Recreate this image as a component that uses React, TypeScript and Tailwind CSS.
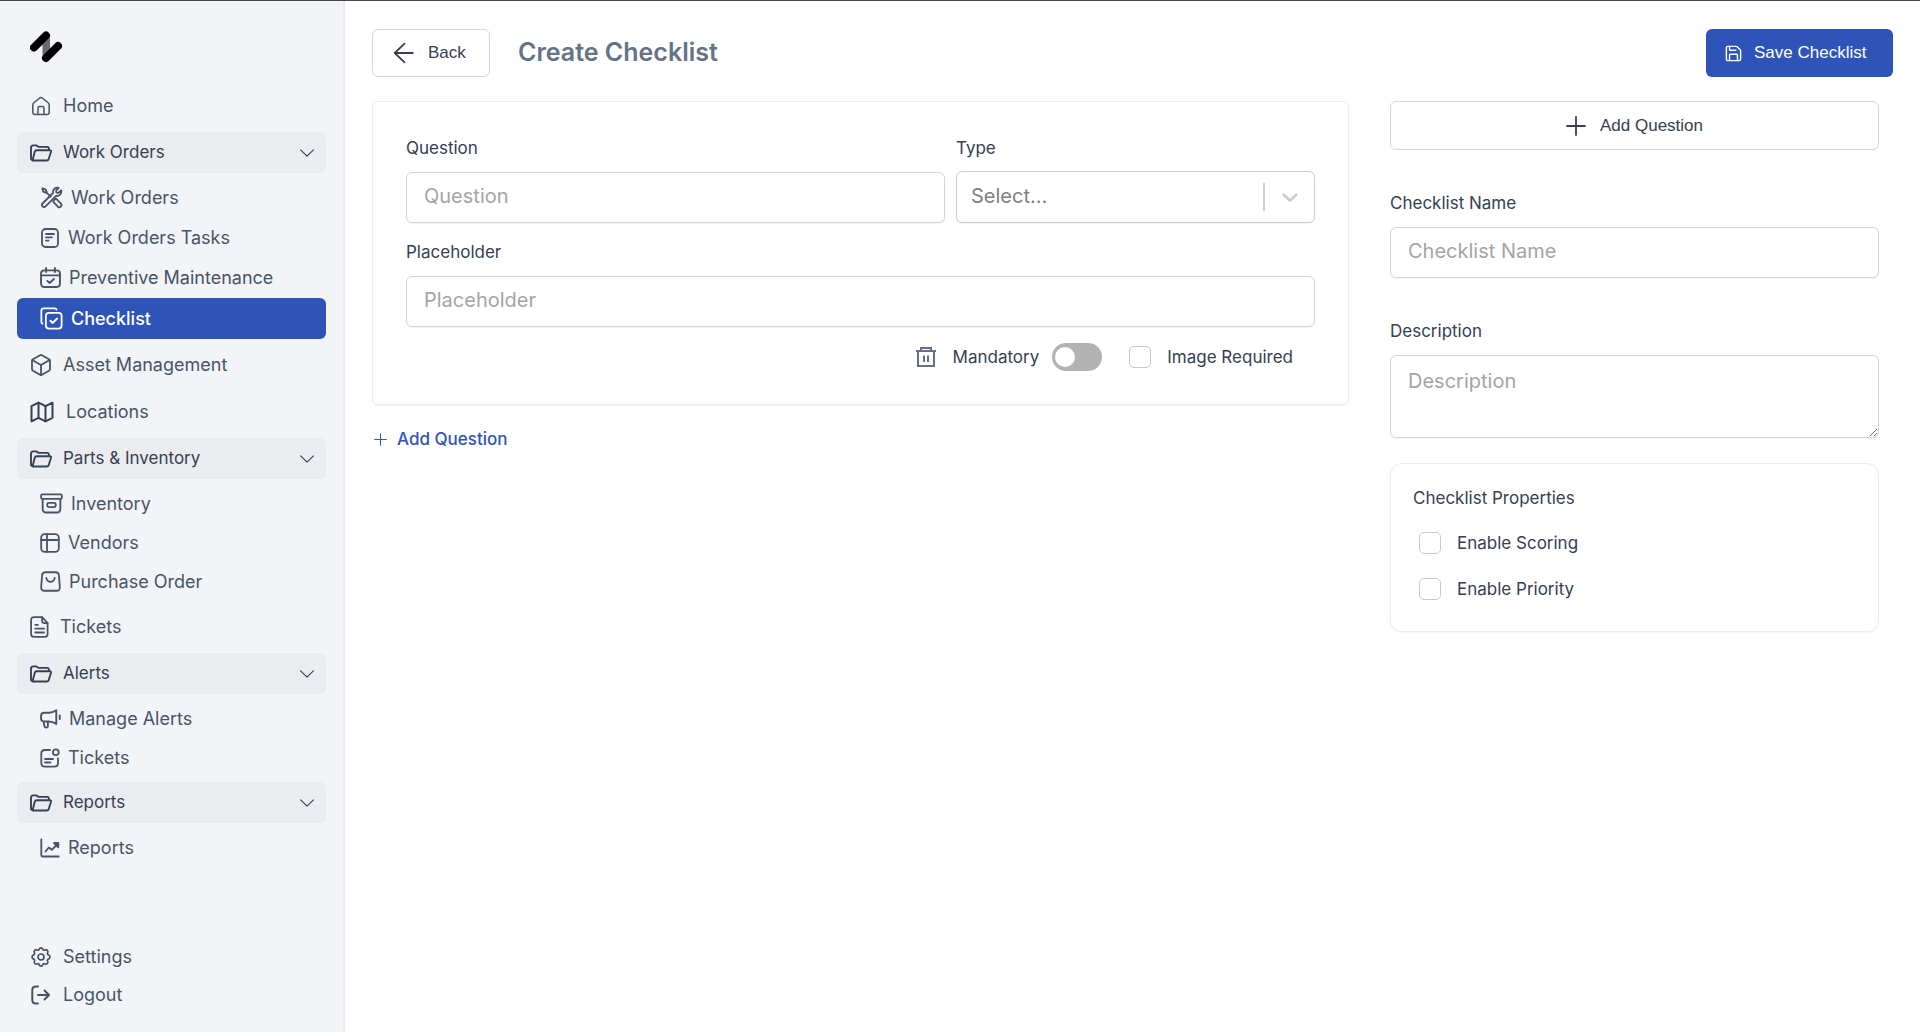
import type { ReactNode } from 'react';
import { Box, Save } from 'lucide-react';
import { TbCopyCheck, TbMap } from 'react-icons/tb';
import { clsx } from 'clsx';

interface IconProps {
  children: ReactNode;
  size?: number;
  strokeWidth?: number;
  className?: string;
}

function Icon({ children, size = 20, strokeWidth = 1.8, className }: IconProps) {
  return (
    <svg
      width={size}
      height={size}
      viewBox="0 0 20 20"
      fill="none"
      stroke="currentColor"
      strokeWidth={strokeWidth}
      strokeLinecap="round"
      strokeLinejoin="round"
      aria-hidden="true"
      className={clsx('shrink-0', className)}
    >
      {children}
    </svg>
  );
}

const Logo = () => (
  <svg width="32" height="32" viewBox="0 0 32 32" aria-label="Company logo" role="img">
    <path d="M12.5 13 20 6v13l-7.500 7z" fill="#6b6b6b" />
    <path d="M4 16.500 16 4.500M16 27 28 15" stroke="#000" strokeWidth="8" strokeLinecap="round" />
  </svg>
);

const HomeIcon = () => (
  <Icon strokeWidth={1.500}>
    <path d="M1.800 9.200c0-1 .4-1.800 1.100-2.400l5.400-4.600c1-.9 2.400-.9 3.400 0l5.400 4.600c.7.600 1.100 1.400 1.100 2.400v7c0 1.400-.8 2.300-2.200 2.300H4c-1.400 0-2.200-.9-2.200-2.300z" />
    <path d="M7 18.300v-6c0-1 .7-1.700 1.700-1.700h2.600c1 0 1.700.7 1.700 1.700v6" />
  </Icon>
);

const FolderIcon = () => (
  <Icon size={22} strokeWidth={1.700}>
    <path d="M3 16.800h12.200c.9 0 1.600-.5 1.800-1.400l2.100-6.600c.2-.8-.2-1.300-1.100-1.300H6c-.9 0-1.400.5-1.600 1.200L2.600 15.500" />
    <path d="M3 16.800c-1.400 0-2.100-.7-2.100-2V5.300c0-1.500.8-2.200 2.200-2.200h2.700l1.800 1.300h7.800c1.200 0 1.800.6 1.800 1.800v1" />
  </Icon>
);

const ToolsIcon = () => (
  <Icon size={23} strokeWidth={1.600}>
    <path d="m2 2 2.800.9 1 2.200-.8.800-2.200-1zM5.500 5.500l3.800 3.800" />
    <path d="M12.200 12.200 14 11l4.200 4.300c1.600 1.800-.9 4.300-2.700 2.700l-4-4.200z" />
    <path d="M16.200 1.700c-2.600-.9-5.400 1.300-4.800 4.300L2.200 15.200c-1.600 1.700.9 4.300 2.600 2.600L14 8.600c3 .6 5.200-2.200 4.300-4.800l-2.300 2.200-1.700-.3-.3-1.700z" />
  </Icon>
);

const TaskIcon = () => (
  <Icon>
    <rect x="2" y="1" width="16" height="18" rx="3.500" />
    <path d="M6 6h8M6 9.300h6M6 12.600h2.500" />
  </Icon>
);

const CalendarIcon = () => (
  <Icon size={21}>
    <rect x="1" y="3.200" width="18" height="15.800" rx="3" />
    <path d="M1.200 8h17.600M5.800 1v3.800M14.200 1v3.800M7 13.200l2.200 2 4-3.800" />
  </Icon>
);

const ArchiveIcon = () => (
  <Icon size={23} strokeWidth={1.600}>
    <rect x="1" y="2" width="18" height="4" rx="1" />
    <path d="M2.300 6v8.500c0 2 1 3.300 3.200 3.300h9c2.200 0 3.200-1.300 3.200-3.300V6" />
    <rect x="6.300" y="9.500" width="7.400" height="3.600" rx="1.300" />
  </Icon>
);

const TableIcon = () => (
  <Icon>
    <rect x="1.200" y="1.200" width="17.600" height="17.600" rx="3.500" />
    <path d="M7 1.200v17.600M1.200 7h17.600" />
  </Icon>
);

const BagIcon = () => (
  <Icon size={21} strokeWidth={1.700}>
    <path d="M5.200 1.200h9.600c1.800 0 3 1 3.200 2.700l.9 11.600c.1 2-1 3.300-3 3.300H4.100c-2 0-3.100-1.300-3-3.300L2 3.900c.2-1.700 1.400-2.700 3.200-2.700z" />
    <path d="M6 6.500c.5 2.400 2 3.800 4 3.800s3.500-1.400 4-3.800" />
  </Icon>
);

const DocumentIcon = () => (
  <Icon size={22} strokeWidth={1.600} className="-mr-1 -ml-px">
    <path d="M11 1H3.700C2 1 1 2 1 3.700v12.600C1 18 2 19 3.700 19h9.600c1.700 0 2.700-1 2.700-2.700V6.500z" />
    <path d="M11 1v3.300c0 1.400.8 2.200 2.200 2.200H16M4.800 8h2.400M4.800 11.500h8M4.800 15h8" />
  </Icon>
);

const MegaphoneIcon = () => (
  <Icon size={21}>
    <path d="M4 4.500h4.500c2.500 0 4.700-.8 7-2.300v13c-2.300-1.500-4.500-2.300-7-2.300H4c-2 0-3-1-3-3V7.500c0-2 1-3 3-3zM3.300 13l1 4.500c.3 1.600 3.200 1.600 3.200-.2V13M18.800 7v3.500" />
  </Icon>
);

const NoteIcon = () => (
  <Icon>
    <path d="M10 2H5C2.700 2 1.300 3.400 1.300 5.700V15c0 2.300 1.400 3.700 3.700 3.700h9.300c2.300 0 3.700-1.400 3.700-3.700v-4.500M5 11h8M5 14.500h5.500" />
    <circle cx="15.800" cy="4.300" r="2.900" />
  </Icon>
);

const ChartIcon = () => (
  <Icon>
    <path d="M1.300 1.300v16c0 .8.4 1.200 1.200 1.200h16.200M5.500 13.500l3.300-4 3 2.300L17.500 6" />
    <path d="M14 5h4.300v4.300z" fill="currentColor" />
  </Icon>
);

const GearIcon = () => (
  <Icon strokeWidth={1.700}>
    <circle cx="10" cy="10" r="3" />
    <path d="M8.600 1.500q1.400-1.100 2.800 0l.8 1.500q.4.400 1 .2l1.700-.5q1.700.2 2 2l-.5 1.800q-.1.600.3.900l1.700 1q1 1.600 0 3.100l-1.700 1q-.4.400-.3.900l.5 1.800q-.4 1.700-2 2l-1.700-.5q-.6-.1-1 .3l-.8 1.500q-1.400 1.100-2.800 0L7.800 17q-.4-.4-1-.3l-1.700.5q-1.700-.3-2-2l.5-1.800q.1-.5-.3-.9l-1.700-1q-1-1.500 0-3.100l1.700-1q.4-.3.3-.9l-.5-1.800q.3-1.800 2-2l1.700.5q.6.200 1-.2z" />
  </Icon>
);

const LogoutIcon = () => (
  <Icon strokeWidth={2}>
    <path d="M7 1.500H4.800C2.600 1.500 1.300 2.700 1.300 5v10c0 2.300 1.300 3.500 3.500 3.500H7M7 10h11M13.500 5.500 18 10l-4.500 4.500" />
  </Icon>
);

const ChevronIcon = () => (
  <Icon size={16} strokeWidth={1.400}>
    <path d="m2 6 8 8 8-8" />
  </Icon>
);

const ArrowLeftIcon = () => (
  <Icon size={22} strokeWidth={1.600}>
    <path d="M18 10H1.500M10.500 1.500 1.500 10l9 8.500" />
  </Icon>
);

const PlusIcon = ({ size, strokeWidth }: { size: number; strokeWidth?: number }) => (
  <Icon size={size} strokeWidth={strokeWidth}>
    <path d="M10 1v18M1 10h18" />
  </Icon>
);

const TrashIcon = () => (
  <svg width="22" height="22" viewBox="0 0 22 22" fill="none" stroke="currentColor" strokeWidth="2" aria-hidden="true">
    <path d="M1 5h20M6 5V2h10v3M3 5v15h16V5M9 9.500V16M13 9.500V16" />
  </svg>
);

function NavLink({ icon, label }: { icon: ReactNode; label: string }) {
  return (
    <a href="#" className="flex h-[42px] items-center gap-3 rounded-md pl-3.5 text-lg text-[#475467]">
      {icon}
      {label}
    </a>
  );
}

interface SubItem {
  label: string;
  icon: ReactNode;
  active?: boolean;
}

function NavGroup({ label, items, spaced }: { label: string; items: SubItem[]; spaced?: boolean }) {
  return (
    <>
      <button
        type="button"
        className="flex h-[41px] w-full items-center gap-[11px] rounded-md bg-[#eaecf0] pr-[11px] pl-[13px] text-[17px] text-[#344054]"
      >
        <FolderIcon />
        <span className="flex-1 text-left">{label}</span>
        <ChevronIcon />
      </button>
      <ul className={clsx('flex flex-col', spaced && 'gap-px')}>
        {items.map((item) => (
          <li key={item.label}>
            <a
              href="#"
              className={clsx(
                'flex items-center gap-2 rounded-md pl-[23px] text-lg',
                item.active ? 'h-[41px] bg-[#2f54b9] font-medium text-white' : 'h-[39px] text-[#475467]',
              )}
            >
              {item.icon}
              {item.label}
            </a>
          </li>
        ))}
      </ul>
    </>
  );
}

function Sidebar() {
  return (
    <aside className="flex w-[345px] shrink-0 flex-col border-r-2 border-[#e8eaee] bg-[#f2f4f7] px-[17px] pb-[18px]">
      <div className="pt-[30px] pb-[22px] pl-[13px]">
        <Logo />
      </div>
      <nav className="flex flex-col gap-[5px]">
        <NavLink icon={<HomeIcon />} label="Home" />
        <NavGroup
          label="Work Orders"
          spaced
          items={[
            { label: 'Work Orders', icon: <ToolsIcon /> },
            { label: 'Work Orders Tasks', icon: <TaskIcon /> },
            { label: 'Preventive Maintenance', icon: <CalendarIcon /> },
            { label: 'Checklist', icon: <TbCopyCheck size={27} className="-mx-0.5 [stroke-width:1.6]" />, active: true },
          ]}
        />
        <NavLink icon={<Box size={24} strokeWidth={1.800} className="-mx-0.5" />} label="Asset Management" />
        <NavLink icon={<TbMap size={28} className="-mr-0.5 -ml-[3px] text-[#344054] [stroke-width:1.7]" />} label="Locations" />
        <NavGroup
          label="Parts & Inventory"
          items={[
            { label: 'Inventory', icon: <ArchiveIcon /> },
            { label: 'Vendors', icon: <TableIcon /> },
            { label: 'Purchase Order', icon: <BagIcon /> },
          ]}
        />
        <NavLink icon={<DocumentIcon />} label="Tickets" />
        <NavGroup
          label="Alerts"
          items={[
            { label: 'Manage Alerts', icon: <MegaphoneIcon /> },
            { label: 'Tickets', icon: <NoteIcon /> },
          ]}
        />
        <NavGroup label="Reports" items={[{ label: 'Reports', icon: <ChartIcon /> }]} />
      </nav>
      <div className="mt-auto flex flex-col">
        {[
          { label: 'Settings', icon: <GearIcon /> },
          { label: 'Logout', icon: <LogoutIcon /> },
        ].map((item) => (
          <a key={item.label} href="#" className="flex h-[38px] items-center gap-3 pl-3.5 text-lg text-[#475467]">
            {item.icon}
            {item.label}
          </a>
        ))}
      </div>
    </aside>
  );
}

const fieldClass =
  'block w-full rounded-md border border-[#d0d5dd] bg-white px-[17px] text-xl text-[#344054] shadow-xs placeholder:text-[#a5a5a5]';

function CheckboxField({ id, label }: { id: string; label: string }) {
  return (
    <div className="flex items-center gap-4">
      <input
        id={id}
        type="checkbox"
        className="size-[22px] appearance-none rounded-[5px] border border-[#c9c9c9] bg-white checked:bg-[#2f54b9]"
      />
      <label htmlFor={id} className="leading-6">
        {label}
      </label>
    </div>
  );
}

function QuestionCard() {
  return (
    <section className="rounded-md border border-[#eaecf0] px-[33px] pt-[34px] pb-[33px] shadow-xs">
      <div className="flex gap-[11px]">
        <div className="flex-1">
          <label htmlFor="question" className="mb-3 block leading-6">
            Question
          </label>
          <input id="question" placeholder="Question" className={clsx(fieldClass, 'h-[51px] pb-1')} />
        </div>
        <div className="w-[359px]">
          <label htmlFor="type" className="mb-[11px] block leading-6">
            Type
          </label>
          <div className="relative">
            <select
              id="type"
              defaultValue=""
              className="block h-[52px] w-full appearance-none rounded-md border border-[#cccccc] bg-white px-3.5 pb-0.5 text-xl text-[#808080] shadow-xs"
            >
              <option value="">Select...</option>
            </select>
            <span className="pointer-events-none absolute inset-y-3 right-[50px] w-0.5 bg-[#cccccc]" />
            <span className="pointer-events-none absolute inset-y-0 right-4 flex items-center text-[#cccccc]">
              <Icon size={18} strokeWidth={3}>
                <path d="m3 7.500 7 6.500 7-6.500" />
              </Icon>
            </span>
          </div>
        </div>
      </div>

      <label htmlFor="placeholder" className="mt-[17px] mb-3 block leading-6">
        Placeholder
      </label>
      <input id="placeholder" placeholder="Placeholder" className={clsx(fieldClass, 'h-[51px] pb-1')} />

      <div className="mt-4 flex h-7 items-center justify-end pr-[22px]">
        <button type="button" aria-label="Delete question" className="mr-4 text-[#667085]">
          <TrashIcon />
        </button>
        <label htmlFor="mandatory" className="mr-[13px] leading-6">
          Mandatory
        </label>
        <input
          id="mandatory"
          type="checkbox"
          role="switch"
          className="mr-[27px] flex h-7 w-[50px] appearance-none items-center rounded-full bg-[#b3b3b3] px-[3px] before:size-5 before:rounded-full before:bg-white checked:justify-end checked:bg-[#2f54b9]"
        />
        <CheckboxField id="image-required" label="Image Required" />
      </div>
    </section>
  );
}

export default function App() {
  return (
    <div className="flex min-h-screen border-t border-[#46464c] bg-white font-[Inter,'Liberation_Sans',sans-serif]">
      <Sidebar />

      <main className="min-w-0 flex-1 px-[27px] pt-7 text-[17px] text-[#344054]">
        <header className="flex h-12 items-center">
          <button
            type="button"
            className="flex h-full w-[118px] items-center gap-[13px] rounded-md border border-[#d0d5dd] pl-5 font-['Liberation_Sans',sans-serif]"
          >
            <ArrowLeftIcon />
            Back
          </button>
          <h1 className="ml-7 text-[25px] font-semibold text-[#647386]">Create Checklist</h1>
          <button
            type="button"
            className="ml-auto flex h-full w-[187px] items-center gap-[11px] rounded-md bg-[#2f54b9] pl-[18px] font-['Liberation_Sans',sans-serif] text-white"
          >
            <Save size={19} strokeWidth={1.800} />
            Save Checklist
          </button>
        </header>

        <div className="mt-6 flex items-start gap-[41px] pr-3.5">
          <div className="min-w-0 flex-1">
            <QuestionCard />
            <button type="button" className="mt-[22px] flex items-center gap-2.5 pl-0.5 font-medium text-[#2f54b9]">
              <PlusIcon size={13} strokeWidth={1.600} />
              Add Question
            </button>
          </div>

          <div className="w-[489px] shrink-0">
            <button
              type="button"
              className="flex h-[49px] w-full items-center justify-center gap-3.5 rounded-md border border-[#d0d5dd] font-['Liberation_Sans',sans-serif]"
            >
              <PlusIcon size={20} strokeWidth={1.800} />
              Add Question
            </button>

            <label htmlFor="name" className="mt-[41px] mb-3 block leading-6">
              Checklist Name
            </label>
            <input id="name" placeholder="Checklist Name" className={clsx(fieldClass, 'h-[51px] pb-1')} />

            <label htmlFor="description" className="mt-[41px] mb-3 block leading-6">
              Description
            </label>
            <textarea id="description" placeholder="Description" className={clsx(fieldClass, 'h-[83px] py-[11px]')} />

            <fieldset className="mt-[25px] rounded-xl border border-[#eaecf0] px-[22px] pb-[30px] shadow-xs">
              <legend className="float-left mt-[22px] mb-[21px] w-full leading-6">Checklist Properties</legend>
              <div className="clear-both flex flex-col gap-[22px] pl-1.5">
                <CheckboxField id="scoring" label="Enable Scoring" />
                <CheckboxField id="priority" label="Enable Priority" />
              </div>
            </fieldset>
          </div>
        </div>
      </main>
    </div>
  );
}
